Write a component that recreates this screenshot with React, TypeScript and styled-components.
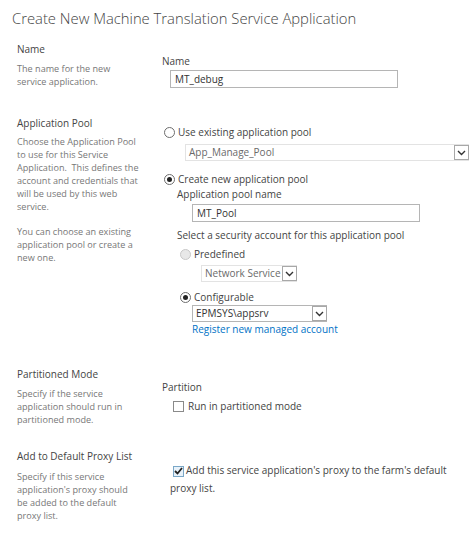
import React from 'react';
import styled, { createGlobalStyle } from 'styled-components';

const GlobalStyle = createGlobalStyle`
  body {
    margin: 0;
    background: #ffffff;
    font-family: "Open Sans", "Liberation Sans", sans-serif;
    color: #444444;
  }
`;

const Page = styled.div`
  width: 474px;
  padding: 6px 0 0 17px;
  box-sizing: border-box;
`;

const Title = styled.h1`
  margin: 0 0 13px -5px;
  font-size: 14.8px;
  line-height: 24px;
  font-weight: 300;
  color: #444444;
`;

const Section = styled.section<{ $gap: number }>`
  display: grid;
  grid-template-columns: 145px 1fr;
  margin-bottom: ${(p) => p.$gap}px;
`;

const Info = styled.div`
  display: flex;
  flex-direction: column;
`;

const Heading = styled.div`
  font-size: 10px;
  line-height: 13px;
  color: #444444;
`;

const Desc = styled.p<{ $top?: number }>`
  margin: ${(p) => p.$top ?? 6}px 0 0;
  font-size: 9.1px;
  line-height: 13px;
  color: #777777;
`;

const Control = styled.div<{ $top: number }>`
  display: flex;
  flex-direction: column;
  align-items: flex-start;
  padding-top: ${(p) => p.$top}px;
  font-size: 10px;
  line-height: 15px;
  color: #444444;
`;

const Label = styled.div<{ $indent?: number; $top?: number }>`
  margin: ${(p) => p.$top ?? 0}px 0 0 ${(p) => p.$indent ?? 0}px;
`;

const TextBox = styled.div<{ $indent: number; $width: number; $top?: number }>`
  margin: ${(p) => p.$top ?? 0}px 0 0 ${(p) => p.$indent}px;
  width: ${(p) => p.$width}px;
  height: 18px;
  box-sizing: border-box;
  border: 1px solid #b5b5b5;
  padding: 0 4px;
  font-size: 10px;
  line-height: 16px;
  color: #333333;
`;

const Select = styled.div<{ $indent: number; $width: number; $top?: number; $disabled?: boolean }>`
  display: flex;
  align-items: center;
  margin: ${(p) => p.$top ?? 0}px 0 0 ${(p) => p.$indent}px;
  width: ${(p) => p.$width}px;
  height: 17px;
  box-sizing: border-box;
  border: 1px solid ${(p) => (p.$disabled ? '#e3e3e3' : '#b5b5b5')};
  padding-left: 3px;
  font-size: 10px;
  color: ${(p) => (p.$disabled ? '#6a6a6a' : '#333333')};
`;

const SelectText = styled.span`
  flex: 1;
  white-space: nowrap;
`;

const Arrow = styled.span`
  display: flex;
  align-items: center;
  justify-content: center;
  width: 15px;
  height: 15px;
  box-sizing: border-box;
  border: 1px solid #a8a8a8;
  background: #ffffff;
  margin-right: -1px;
`;

const Option = styled.div<{ $indent?: number; $top?: number }>`
  display: flex;
  align-items: center;
  gap: 3px;
  margin: ${(p) => p.$top ?? 0}px 0 0 ${(p) => p.$indent ?? 0}px;
`;

const Radio = styled.span<{ $checked?: boolean; $disabled?: boolean }>`
  position: relative;
  width: 11px;
  height: 11px;
  box-sizing: border-box;
  border-radius: 50%;
  border: 1px solid ${(p) => (p.$disabled ? '#c8c8c8' : '#6d6d6d')};
  background: ${(p) => (p.$disabled ? '#e8e8e8' : '#ffffff')};

  &::after {
    content: '';
    display: ${(p) => (p.$checked ? 'block' : 'none')};
    position: absolute;
    left: 2px;
    top: 2px;
    width: 5px;
    height: 5px;
    border-radius: 50%;
    background: #222222;
  }
`;

const Box = styled.span<{ $checked?: boolean; $shift?: number }>`
  display: inline-flex;
  align-items: center;
  justify-content: center;
  width: 11px;
  height: 11px;
  box-sizing: border-box;
  border: 1px solid ${(p) => (p.$checked ? '#7aa7c7' : '#8a8a8a')};
  background: ${(p) => (p.$checked ? '#e8f2fa' : '#ffffff')};
  vertical-align: -1px;
  margin: 0 2px 0 ${(p) => p.$shift ?? 0}px;
`;

const Link = styled.a`
  margin-left: 30px;
  color: #0072c6;
  text-decoration: none;
`;

const Wrapped = styled.div`
  margin-left: 8px;
  line-height: 18px;
`;

const Chevron = () => (
  <svg width="9" height="6" viewBox="0 0 9 6">
    <path d="M1 1 L4.5 4.5 L8 1" fill="none" stroke="#333" strokeWidth="1.4" />
  </svg>
);

const Tick = () => (
  <svg width="9" height="8" viewBox="0 0 9 8">
    <path d="M1 4 L3.5 6.5 L8 1" fill="none" stroke="#222" strokeWidth="1.8" />
  </svg>
);

export default function App() {
  return (
    <Page>
      <GlobalStyle />
      <Title>Create New Machine Translation Service Application</Title>

      <Section $gap={29}>
        <Info>
          <Heading>Name</Heading>
          <Desc>
            The name for the new
            <br />
            service application.
          </Desc>
        </Info>
        <Control $top={11}>
          <Label>Name</Label>
          <TextBox $indent={8} $width={228} $top={1}>
            MT_debug
          </TextBox>
        </Control>
      </Section>

      <Section $gap={31}>
        <Info>
          <Heading>Application Pool</Heading>
          <Desc $top={5}>
            Choose the Application Pool
            <br />
            to use for this Service
            <br />
            Application.&nbsp; This defines the
            <br />
            account and credentials that
            <br />
            will be used by this web
            <br />
            service.
          </Desc>
          <Desc $top={12}>
            You can choose an existing
            <br />
            application pool or create a
            <br />
            new one.
          </Desc>
        </Info>
        <Control $top={8}>
          <Option $indent={2}>
            <Radio />
            Use existing application pool
          </Option>
          <Select $indent={23} $width={284} $top={4} $disabled>
            <SelectText>App_Manage_Pool</SelectText>
            <Arrow>
              <Chevron />
            </Arrow>
          </Select>
          <Option $indent={2} $top={11}>
            <Radio $checked />
            Create new application pool
          </Option>
          <Label $indent={15}>Application pool name</Label>
          <TextBox $indent={30} $width={228} $top={2}>
            MT_Pool
          </TextBox>
          <Label $indent={15} $top={6}>
            Select a security account for this application pool
          </Label>
          <Option $indent={18} $top={4}>
            <Radio $disabled />
            Predefined
          </Option>
          <Select $indent={39} $width={96} $top={3} $disabled>
            <SelectText>Network Service</SelectText>
            <Arrow>
              <Chevron />
            </Arrow>
          </Select>
          <Option $indent={18} $top={8}>
            <Radio $checked />
            Configurable
          </Option>
          <Select $indent={30} $width={135}>
            <SelectText>EPMSYS\appsrv</SelectText>
            <Arrow>
              <Chevron />
            </Arrow>
          </Select>
          <Link href="#">Register new managed account</Link>
        </Control>
      </Section>

      <Section $gap={24}>
        <Info>
          <Heading>Partitioned Mode</Heading>
          <Desc>
            Specify if the service
            <br />
            application should run in
            <br />
            partitioned mode.
          </Desc>
        </Info>
        <Control $top={12}>
          <Label>Partition</Label>
          <Option $indent={11} $top={4} style={{ gap: 2 }}>
            <Box />
            Run in partitioned mode
          </Option>
        </Control>
      </Section>

      <Section $gap={20}>
        <Info>
          <Heading>Add to Default Proxy List</Heading>
          <Desc $top={7}>
            Specify if this service
            <br />
            application's proxy should
            <br />
            be added to the default
            <br />
            proxy list.
          </Desc>
        </Info>
        <Control $top={11}>
          <Wrapped>
            <Box $checked $shift={3}>
              <Tick />
            </Box>
            Add this service application's proxy to the farm's default
            <br />
            proxy list.
          </Wrapped>
        </Control>
      </Section>
    </Page>
  );
}
